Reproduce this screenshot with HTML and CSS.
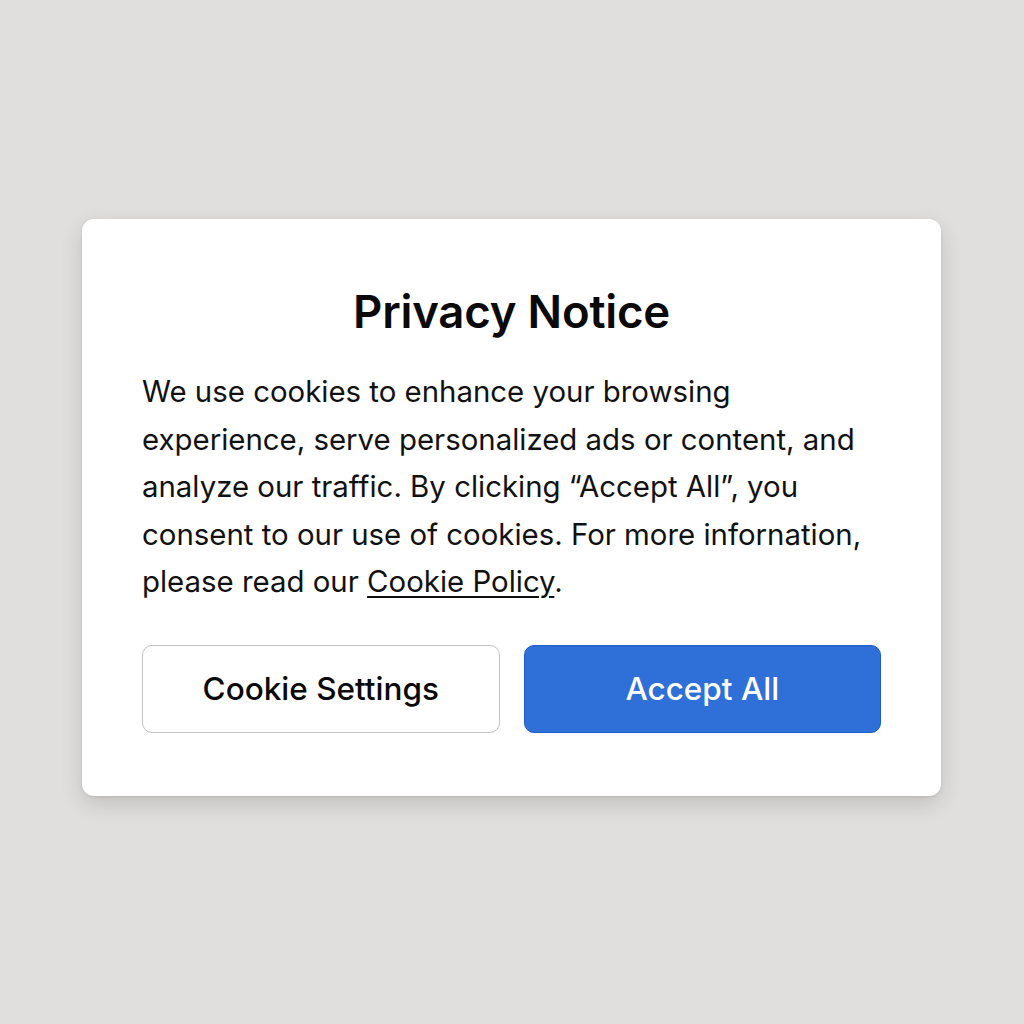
FILE: index.html
```html
<!DOCTYPE html>
<html lang="en">
<head>
<meta charset="utf-8">
<title>Privacy Notice</title>
<link rel="stylesheet" href="styles.css">
</head>
<body>
<main class="page">
  <section class="card">
    <h1 class="title">Privacy Notice</h1>
    <p class="body">We use cookies to enhance your browsing experience, serve personalized ads or content, and analyze our traffic. By clicking “Accept All”, you consent to our use of cookies. For more infornation, please read our <a class="link" href="#">Cookie Policy</a>.</p>
    <div class="actions">
      <button class="btn btn-secondary">Cookie Settings</button>
      <button class="btn btn-primary">Accept All</button>
    </div>
  </section>
</main>
</body>
</html>
```

FILE: styles.css
```css
* { box-sizing: border-box; }
html, body {
  margin: 0;
  padding: 0;
  background: #e0dfdd;
  font-family: Inter, "Noto Sans", "Liberation Sans", sans-serif;
}
.page {
  width: 1024px;
  height: 1024px;
  display: flex;
  justify-content: flex-start;
  align-items: flex-start;
  padding: 219px 0 0 82px;
}
.card {
  width: 859px;
  background: #ffffff;
  border-radius: 12px;
  box-shadow: 0 8px 22px rgba(0,0,0,0.14), 0 1px 3px rgba(0,0,0,0.08);
  padding: 66px 60px 63px 60px;
}
.title {
  margin: 0;
  text-align: center;
  font-size: 45.5px;
  font-weight: 600;
  color: #0a0a0a;
  line-height: 54px;
  letter-spacing: -0.2px;
}
.body {
  margin: 29px 0 0 0;
  font-size: 29.4px;
  line-height: 47.5px;
  color: #111111;
  font-weight: 400;
}
.link {
  color: #111111;
  text-decoration: underline;
  text-decoration-thickness: 1.5px;
  text-underline-offset: 4px;
}
.actions {
  margin-top: 39px;
  display: grid;
  grid-template-columns: 1fr 1fr;
  gap: 24px;
}
.btn {
  height: 88px;
  border-radius: 10px;
  font-family: inherit;
  font-size: 31.5px;
  font-weight: 500;
  cursor: pointer;
}
.btn-secondary {
  background: #ffffff;
  border: 1.5px solid #c2c2c2;
  color: #0a0a0a;
}
.btn-primary {
  background: #2f6fd8;
  border: 1px solid #1f5ccc;
  color: #ffffff;
}
```
